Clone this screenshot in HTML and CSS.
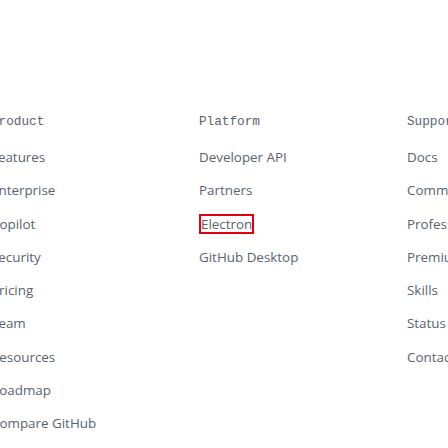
FILE: index.html
```html
<!DOCTYPE html>
<html lang="en">
<head>
<meta charset="utf-8">
<title>Footer</title>
<link rel="stylesheet" href="styles.css">
</head>
<body>
<nav class="footer">
  <section class="col">
    <h3 class="heading">Product</h3>
    <ul class="links">
      <li><a href="#">Features</a></li>
      <li><a href="#">Enterprise</a></li>
      <li><a href="#">Copilot</a></li>
      <li><a href="#">Security</a></li>
      <li><a href="#">Pricing</a></li>
      <li><a href="#">Team</a></li>
      <li><a href="#">Resources</a></li>
      <li><a href="#">Roadmap</a></li>
      <li><a href="#">Compare GitHub</a></li>
    </ul>
  </section>
  <section class="col">
    <h3 class="heading">Platform</h3>
    <ul class="links">
      <li><a href="#">Developer API</a></li>
      <li><a href="#">Partners</a></li>
      <li><a href="#" class="focused">Electron</a></li>
      <li><a href="#">GitHub Desktop</a></li>
    </ul>
  </section>
  <section class="col">
    <h3 class="heading">Support</h3>
    <ul class="links">
      <li><a href="#">Docs</a></li>
      <li><a href="#">Community Forum</a></li>
      <li><a href="#">Professional Services</a></li>
      <li><a href="#">Premium Support</a></li>
      <li><a href="#">Skills</a></li>
      <li><a href="#">Status</a></li>
      <li><a href="#">Contact GitHub</a></li>
    </ul>
  </section>
</nav>
</body>
</html>
```
FILE: styles.css
```css
html, body {
  margin: 0;
  padding: 0;
  background: #ffffff;
  overflow: hidden;
}

body {
  font-family: "Open Sans", "Noto Sans", sans-serif;
  font-size: 13.4px;
  color: #59636e;
}

.footer {
  display: grid;
  grid-template-columns: repeat(3, 208px);
  margin-left: -9px;
  padding-top: 111px;
}

.col {
  min-width: 0;
  white-space: nowrap;
}

.heading {
  margin: 0 0 15px;
  font-family: "Liberation Mono", "DejaVu Sans Mono", monospace;
  font-size: 12.7px;
  font-weight: 400;
  line-height: 21px;
  color: #59636e;
}

.links {
  list-style: none;
  margin: 0;
  padding: 0;
}

.links li {
  line-height: 21px;
  margin-bottom: 12.3px;
}

.links a {
  color: #59636e;
  text-decoration: none;
}

.links a.focused {
  display: inline-block;
  line-height: 16px;
  border: 2px solid #e5000b;
  margin-left: 0;
  vertical-align: top;
  margin-top: 0.5px;
}
```
